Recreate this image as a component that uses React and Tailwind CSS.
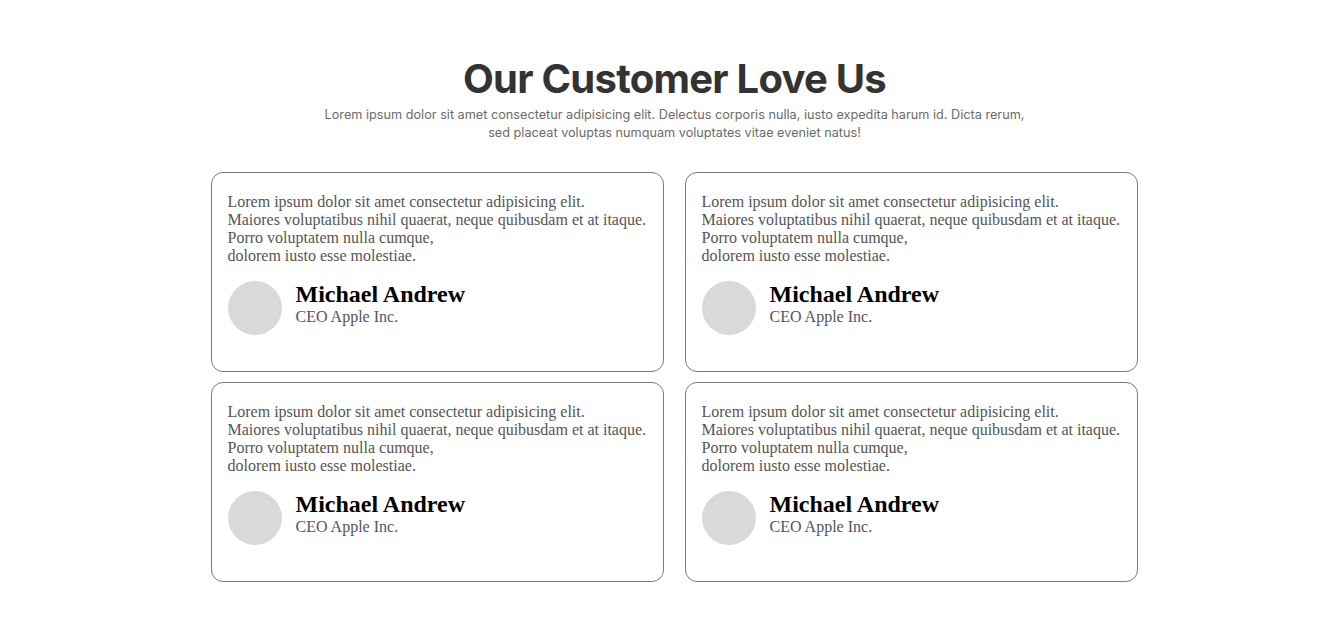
export default function App() {
  const cards = [0, 1, 2, 3];
  return (
    <div className="min-h-screen bg-white pl-[8px]">
      <div className="pt-[55px] flex flex-col items-center">
        <h1
          className="text-[40px] leading-[48px] font-bold text-[#333333] tracking-[-0.75px]"
          style={{ fontFamily: "Inter, 'Noto Sans', sans-serif" }}
        >
          Our Customer Love Us
        </h1>
        <p
          className="mt-[3px] text-center text-[12.7px] leading-[18px] text-[#6b6b6b]"
          style={{ fontFamily: "Inter, 'Noto Sans', sans-serif" }}
        >
          Lorem ipsum dolor sit amet consectetur adipisicing elit. Delectus corporis nulla, iusto expedita harum id. Dicta rerum,
          <br />
          sed placeat voluptas numquam voluptates vitae eveniet natus!
        </p>
        <div className="mt-[30px] -ml-[1px] grid grid-cols-[453px_453px] gap-x-[21px] gap-y-[10px]">
          {cards.map((i) => (
            <div
              key={i}
              className="h-[200px] rounded-[12px] border border-[#7a7a7a] px-4 pt-[20px]"
              style={{ fontFamily: "'Liberation Serif', 'Times New Roman', serif" }}
            >
              <p className="text-[16px] leading-[18px] text-[#555555]">
                Lorem ipsum dolor sit amet consectetur adipisicing elit.
                <br />
                Maiores voluptatibus nihil quaerat, neque quibusdam et at itaque.
                <br />
                Porro voluptatem nulla cumque,
                <br />
                dolorem iusto esse molestiae.
              </p>
              <div className="mt-[16px] flex items-start gap-[14px]">
                <div className="h-[54px] w-[54px] shrink-0 rounded-full bg-[#d9d9d9]" />
                <div>
                  <h2 className="text-[24px] leading-[26px] font-bold text-black">Michael Andrew</h2>
                  <p className="mt-[1px] text-[16px] leading-[18px] text-[#555555]">CEO Apple Inc.</p>
                </div>
              </div>
            </div>
          ))}
        </div>
      </div>
    </div>
  );
}
